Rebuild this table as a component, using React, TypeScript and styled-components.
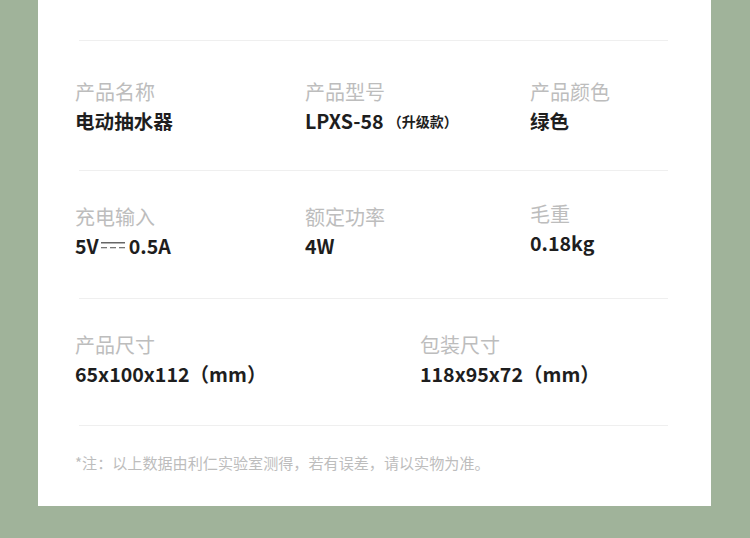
import React from "react";
import styled, { createGlobalStyle } from "styled-components";

const GlobalStyle = createGlobalStyle`
  html, body {
    margin: 0;
    padding: 0;
    background: #a0b39a;
  }
  body {
    font-family: "Noto Sans CJK SC", "Noto Sans", sans-serif;
  }
`;

const Page = styled.div`
  width: 750px;
  height: 538px;
  background: #a0b39a;
  overflow: hidden;
  padding: 0 39px 0 38px;
  box-sizing: border-box;
`;

const Card = styled.div`
  background: #fff;
  height: 506px;
  padding: 40px 43px 0 41px;
  box-sizing: border-box;
`;

const Divider = styled.div`
  height: 1px;
  background: #efefef;
`;

interface SectionProps {
  readonly cols: string;
  readonly top: number;
  readonly bottom: number;
}

const Section = styled.div<SectionProps>`
  display: grid;
  grid-template-columns: ${p => p.cols};
  margin-left: -4px;
  padding: ${p => p.top}px 0 ${p => p.bottom}px;
`;

const Cell = styled.div<{ readonly lift?: number }>`
  display: flex;
  flex-direction: column;
  margin-top: ${p => -(p.lift || 0)}px;
`;

const Label = styled.div`
  font-size: 20px;
  line-height: 28px;
  color: #bdbdbd;
  font-weight: 400;
  margin-bottom: 1px;
`;

const Value = styled.div`
  font-size: 19.6px;
  line-height: 28px;
  color: #1e1e1e;
  font-weight: 700;
  display: flex;
  align-items: center;
  white-space: nowrap;
`;

const Small = styled.span`
  font-size: 14px;
  margin-left: 4px;
`;

const DcMark = styled.svg`
  margin: 0 4px 0 2px;
`;

const Note = styled.div`
  margin-left: -4px;
  padding-top: 26px;
  font-size: 15.1px;
  line-height: 20px;
  color: #bdbdbd;
  white-space: nowrap;
`;

const DcSymbol = () => (
  <DcMark width="24" height="12" viewBox="0 0 24 12">
    <rect x="0" y="2" width="24" height="1.5" fill="#666" />
    <rect x="0" y="7" width="6" height="1.3" fill="#777" />
    <rect x="9" y="7" width="6" height="1.3" fill="#777" />
    <rect x="18" y="7" width="6" height="1.3" fill="#777" />
  </DcMark>
);

export default function App() {
  return (
    <>
      <GlobalStyle />
      <Page>
        <Card>
          <Divider />
          <Section cols="230px 225px 1fr" top={37} bottom={35}>
            <Cell>
              <Label>产品名称</Label>
              <Value>电动抽水器</Value>
            </Cell>
            <Cell>
              <Label>产品型号</Label>
              <Value>
                LPXS-58<Small>（升级款）</Small>
              </Value>
            </Cell>
            <Cell>
              <Label>产品颜色</Label>
              <Value>绿色</Value>
            </Cell>
          </Section>
          <Divider />
          <Section cols="230px 225px 1fr" top={32} bottom={38}>
            <Cell>
              <Label>充电输入</Label>
              <Value>
                5V<DcSymbol />0.5A
              </Value>
            </Cell>
            <Cell>
              <Label>额定功率</Label>
              <Value>4W</Value>
            </Cell>
            <Cell lift={3}>
              <Label>毛重</Label>
              <Value>0.18kg</Value>
            </Cell>
          </Section>
          <Divider />
          <Section cols="345px 1fr" top={32} bottom={37}>
            <Cell>
              <Label>产品尺寸</Label>
              <Value>65x100x112（mm）</Value>
            </Cell>
            <Cell>
              <Label>包装尺寸</Label>
              <Value>118x95x72（mm）</Value>
            </Cell>
          </Section>
          <Divider />
          <Note>*注：以上数据由利仁实验室测得，若有误差，请以实物为准。</Note>
        </Card>
      </Page>
    </>
  );
}
